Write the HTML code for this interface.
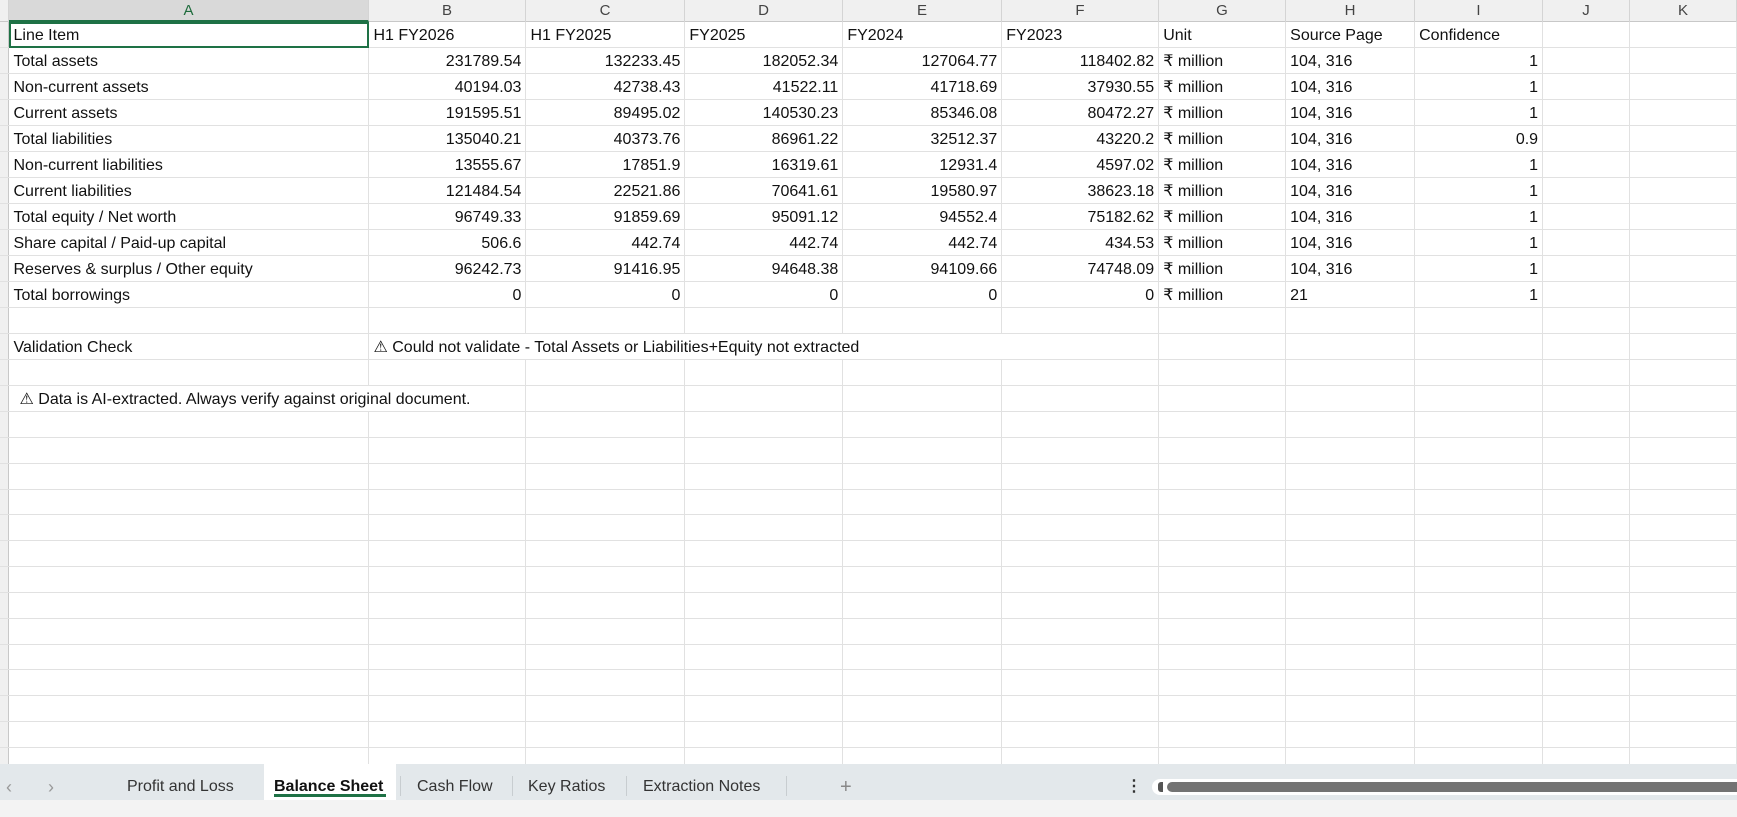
<!DOCTYPE html>
<html><head><meta charset="utf-8"><style>
*{margin:0;padding:0;box-sizing:border-box}
body{width:1737px;height:817px;overflow:hidden;background:#fff;font-family:"Liberation Sans",Arial,sans-serif;position:relative}
#hdr{position:absolute;left:0;top:0;width:1737px;height:22px;background:#f0f0f0;border-bottom:1px solid #c8c8c8}
.h{position:absolute;top:0;height:22px;line-height:22px;text-align:center;font-size:15px;color:#444;border-right:1px solid #d4d4d4}
#grid{position:absolute;left:0;top:22px;width:1737px;height:742px;overflow:hidden}
table{border-collapse:collapse;table-layout:fixed;position:absolute;left:0;top:0}
td{height:25.85px;border-right:1px solid #e1e1e1;border-bottom:1px solid #e1e1e1;font-size:16px;color:#111;white-space:nowrap;overflow:visible;padding:3px 4px 0;line-height:22px;vertical-align:middle}
td.n{text-align:right}
td.rh{background:#f0f0f0;border-right:1px solid #c8c8c8;padding:0}
#tabs{position:absolute;left:0;top:764px;width:1737px;height:36px;background:#e3e8eb}
.t{position:absolute;top:5px;height:36px;line-height:36px;font-size:16px;color:#333}
.sep{position:absolute;top:12px;width:1px;height:20px;background:#c8cdd0}
#status{position:absolute;left:0;top:800px;width:1737px;height:17px;background:#f3f3f3}
</style></head><body>
<div id="hdr">
<div class="h" style="left:0;width:9px"></div>
<div class="h" style="left:9px;width:360px;background:#d9d9d9;color:#1e6b3c;border-bottom:2px solid #1e7145">A</div>
<div class="h" style="left:369px;width:157px">B</div>
<div class="h" style="left:526px;width:159px">C</div>
<div class="h" style="left:685px;width:158px">D</div>
<div class="h" style="left:843px;width:159px">E</div>
<div class="h" style="left:1002px;width:157px">F</div>
<div class="h" style="left:1159px;width:127px">G</div>
<div class="h" style="left:1286px;width:129px">H</div>
<div class="h" style="left:1415px;width:128px">I</div>
<div class="h" style="left:1543px;width:87px">J</div>
<div class="h" style="left:1630px;width:107px">K</div>
</div>
<div id="grid">
<table>
<colgroup><col style="width:9px"><col style="width:360px"><col style="width:157px"><col style="width:159px"><col style="width:158px"><col style="width:159px"><col style="width:157px"><col style="width:127px"><col style="width:129px"><col style="width:128px"><col style="width:87px"><col style="width:107px"></colgroup>
<tr><td class="rh"></td><td style="outline:2px solid #1e7145;outline-offset:-2px">Line Item</td><td>H1 FY2026</td><td>H1 FY2025</td><td>FY2025</td><td>FY2024</td><td>FY2023</td><td>Unit</td><td>Source Page</td><td>Confidence</td><td></td><td></td></tr>
<tr><td class="rh"></td><td>Total assets</td><td class="n">231789.54</td><td class="n">132233.45</td><td class="n">182052.34</td><td class="n">127064.77</td><td class="n">118402.82</td><td>₹ million</td><td>104, 316</td><td class="n">1</td><td></td><td></td></tr>
<tr><td class="rh"></td><td>Non-current assets</td><td class="n">40194.03</td><td class="n">42738.43</td><td class="n">41522.11</td><td class="n">41718.69</td><td class="n">37930.55</td><td>₹ million</td><td>104, 316</td><td class="n">1</td><td></td><td></td></tr>
<tr><td class="rh"></td><td>Current assets</td><td class="n">191595.51</td><td class="n">89495.02</td><td class="n">140530.23</td><td class="n">85346.08</td><td class="n">80472.27</td><td>₹ million</td><td>104, 316</td><td class="n">1</td><td></td><td></td></tr>
<tr><td class="rh"></td><td>Total liabilities</td><td class="n">135040.21</td><td class="n">40373.76</td><td class="n">86961.22</td><td class="n">32512.37</td><td class="n">43220.2</td><td>₹ million</td><td>104, 316</td><td class="n">0.9</td><td></td><td></td></tr>
<tr><td class="rh"></td><td>Non-current liabilities</td><td class="n">13555.67</td><td class="n">17851.9</td><td class="n">16319.61</td><td class="n">12931.4</td><td class="n">4597.02</td><td>₹ million</td><td>104, 316</td><td class="n">1</td><td></td><td></td></tr>
<tr><td class="rh"></td><td>Current liabilities</td><td class="n">121484.54</td><td class="n">22521.86</td><td class="n">70641.61</td><td class="n">19580.97</td><td class="n">38623.18</td><td>₹ million</td><td>104, 316</td><td class="n">1</td><td></td><td></td></tr>
<tr><td class="rh"></td><td>Total equity / Net worth</td><td class="n">96749.33</td><td class="n">91859.69</td><td class="n">95091.12</td><td class="n">94552.4</td><td class="n">75182.62</td><td>₹ million</td><td>104, 316</td><td class="n">1</td><td></td><td></td></tr>
<tr><td class="rh"></td><td>Share capital / Paid-up capital</td><td class="n">506.6</td><td class="n">442.74</td><td class="n">442.74</td><td class="n">442.74</td><td class="n">434.53</td><td>₹ million</td><td>104, 316</td><td class="n">1</td><td></td><td></td></tr>
<tr><td class="rh"></td><td>Reserves &amp; surplus / Other equity</td><td class="n">96242.73</td><td class="n">91416.95</td><td class="n">94648.38</td><td class="n">94109.66</td><td class="n">74748.09</td><td>₹ million</td><td>104, 316</td><td class="n">1</td><td></td><td></td></tr>
<tr><td class="rh"></td><td>Total borrowings</td><td class="n">0</td><td class="n">0</td><td class="n">0</td><td class="n">0</td><td class="n">0</td><td>₹ million</td><td>21</td><td class="n">1</td><td></td><td></td></tr>
<tr><td class="rh"></td><td></td><td></td><td></td><td></td><td></td><td></td><td></td><td></td><td></td><td></td><td></td></tr>
<tr><td class="rh"></td><td>Validation Check</td><td colspan="5" style="border-right:1px solid #e1e1e1">⚠ Could not validate - Total Assets or Liabilities+Equity not extracted</td><td></td><td></td><td></td><td></td><td></td></tr>
<tr><td class="rh"></td><td></td><td></td><td></td><td></td><td></td><td></td><td></td><td></td><td></td><td></td><td></td></tr>
<tr><td class="rh"></td><td colspan="2" style="border-right:1px solid #e1e1e1;padding-left:10px">⚠ Data is AI-extracted. Always verify against original document.</td><td></td><td></td><td></td><td></td><td></td><td></td><td></td><td></td><td></td></tr>
<tr><td class="rh"></td><td></td><td></td><td></td><td></td><td></td><td></td><td></td><td></td><td></td><td></td><td></td></tr>
<tr><td class="rh"></td><td></td><td></td><td></td><td></td><td></td><td></td><td></td><td></td><td></td><td></td><td></td></tr>
<tr><td class="rh"></td><td></td><td></td><td></td><td></td><td></td><td></td><td></td><td></td><td></td><td></td><td></td></tr>
<tr><td class="rh"></td><td></td><td></td><td></td><td></td><td></td><td></td><td></td><td></td><td></td><td></td><td></td></tr>
<tr><td class="rh"></td><td></td><td></td><td></td><td></td><td></td><td></td><td></td><td></td><td></td><td></td><td></td></tr>
<tr><td class="rh"></td><td></td><td></td><td></td><td></td><td></td><td></td><td></td><td></td><td></td><td></td><td></td></tr>
<tr><td class="rh"></td><td></td><td></td><td></td><td></td><td></td><td></td><td></td><td></td><td></td><td></td><td></td></tr>
<tr><td class="rh"></td><td></td><td></td><td></td><td></td><td></td><td></td><td></td><td></td><td></td><td></td><td></td></tr>
<tr><td class="rh"></td><td></td><td></td><td></td><td></td><td></td><td></td><td></td><td></td><td></td><td></td><td></td></tr>
<tr><td class="rh"></td><td></td><td></td><td></td><td></td><td></td><td></td><td></td><td></td><td></td><td></td><td></td></tr>
<tr><td class="rh"></td><td></td><td></td><td></td><td></td><td></td><td></td><td></td><td></td><td></td><td></td><td></td></tr>
<tr><td class="rh"></td><td></td><td></td><td></td><td></td><td></td><td></td><td></td><td></td><td></td><td></td><td></td></tr>
<tr><td class="rh"></td><td></td><td></td><td></td><td></td><td></td><td></td><td></td><td></td><td></td><td></td><td></td></tr>
<tr><td class="rh"></td><td></td><td></td><td></td><td></td><td></td><td></td><td></td><td></td><td></td><td></td><td></td></tr>
<tr><td class="rh"></td><td></td><td></td><td></td><td></td><td></td><td></td><td></td><td></td><td></td><td></td><td></td></tr>
</table>
</div>
<div id="tabs">
<div class="t" style="left:6px;color:#999;font-size:18px">&#x2039;</div>
<div class="t" style="left:48px;color:#999;font-size:18px">&#x203A;</div>
<div class="t" style="left:127px">Profit and Loss</div>
<div style="position:absolute;left:264px;top:0;width:132px;height:36px;background:#fff"></div>
<div class="t" style="left:274px;font-weight:bold;color:#111">Balance Sheet</div>
<div style="position:absolute;left:274px;top:30px;width:112px;height:3px;background:#1e7145"></div>
<div class="sep" style="left:400px"></div>
<div class="t" style="left:417px">Cash Flow</div>
<div class="sep" style="left:512px"></div>
<div class="t" style="left:528px">Key Ratios</div>
<div class="sep" style="left:626px"></div>
<div class="t" style="left:643px">Extraction Notes</div>
<div class="sep" style="left:786px"></div>
<div class="t" style="left:840px;color:#888;font-size:20px">+</div>
<div class="t" style="left:1126px;font-weight:bold">⋮</div>
<div style="position:absolute;left:1152px;top:15px;width:585px;height:16px;background:#fff;border-radius:8px 0 0 8px"></div>
<div style="position:absolute;left:1158px;top:18px;width:5px;height:10px;background:#555;border-radius:3px 0 0 3px"></div>
<div style="position:absolute;left:1167px;top:18px;width:570px;height:10px;background:#737373;border-radius:5px 0 0 5px"></div>
</div>
<div id="status"></div>
</body></html>
